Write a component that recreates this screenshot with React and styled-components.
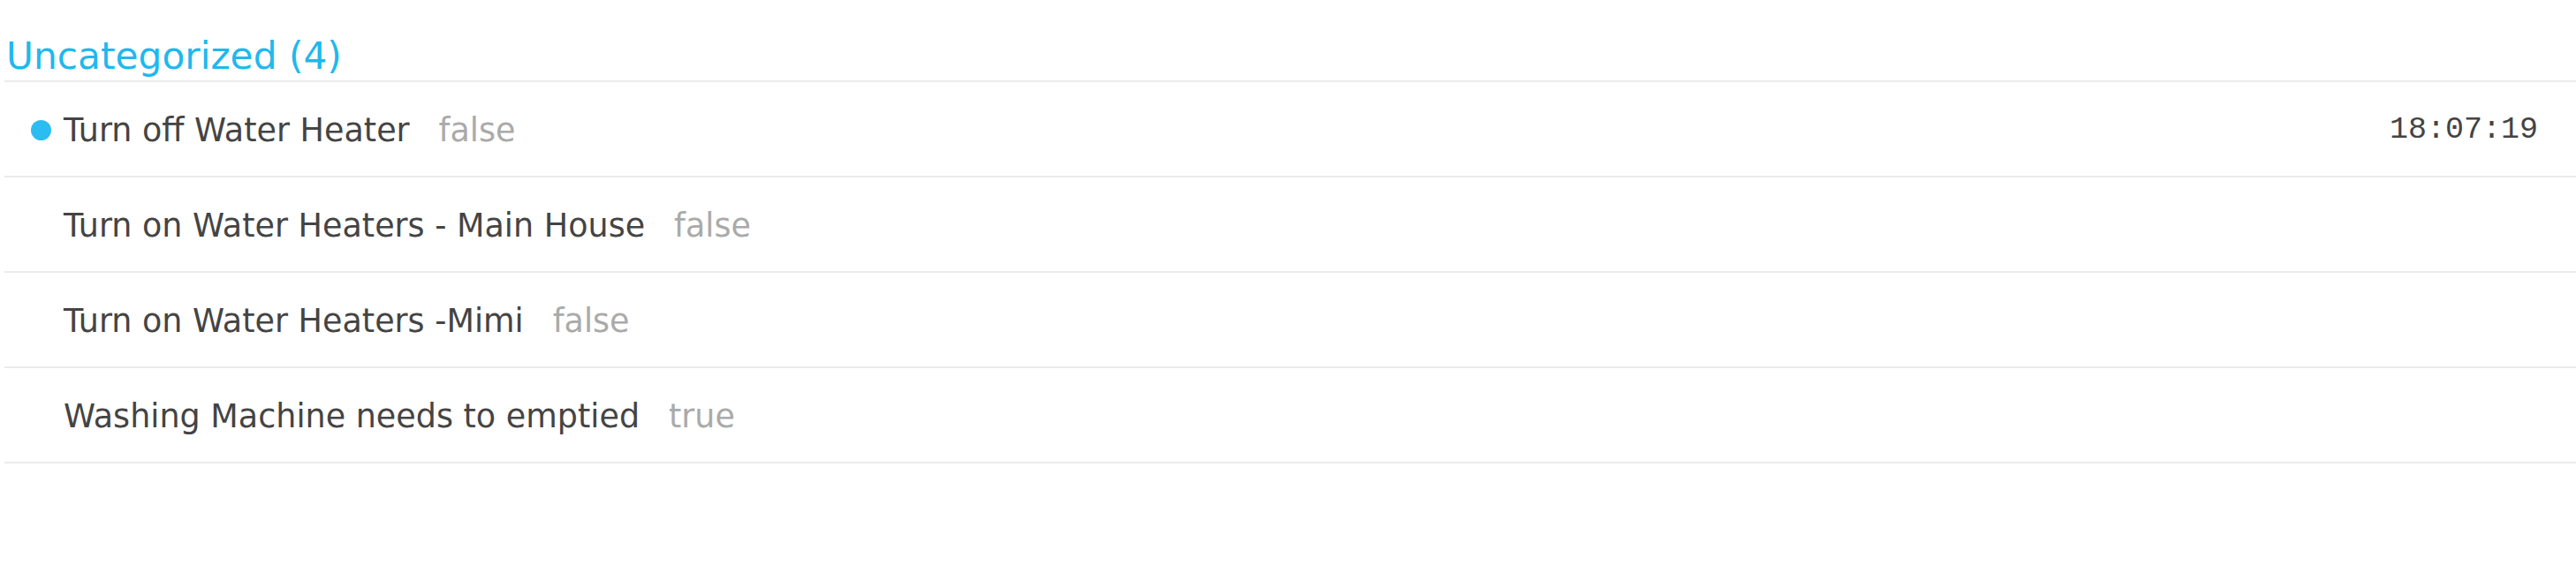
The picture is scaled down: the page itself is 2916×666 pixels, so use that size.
import React from 'react';
import styled, { createGlobalStyle } from 'styled-components';

const GlobalStyle = createGlobalStyle`
  body {
    margin: 0;
    background: #fff;
    font-family: "DejaVu Sans", Verdana, sans-serif;
  }
`;

const Group = styled.section`
  padding: 0 0 0 5px;
`;

const GroupTitle = styled.h2`
  margin: 0;
  padding: 40px 0 4px 2px;
  font-size: 42.3px;
  font-weight: normal;
  line-height: 47px;
  color: #1fb8ee;
  border-bottom: 2px solid #ebebeb;
`;

const List = styled.ul`
  list-style: none;
  margin: 0;
  padding: 0;
`;

const Row = styled.li`
  display: flex;
  align-items: center;
  height: 106px;
  border-bottom: 2px solid #ebebeb;
  padding: 2px 43px 0 30px;
  box-sizing: border-box;
  height: 108px;
`;

const Dot = styled.span`
  width: 23px;
  height: 23px;
  border-radius: 50%;
  flex: none;
  background: ${(p) => (p.$active ? '#2cbcf2' : 'transparent')};
  margin-right: 14px;
`;

const Name = styled.span`
  font-size: 36.5px;
  color: #444;
`;

const Value = styled.span`
  font-size: 36.5px;
  color: #aaa;
  margin-left: 33px;
`;

const Time = styled.span`
  margin-left: auto;
  font-family: "Liberation Mono", "Courier New", monospace;
  font-size: 35px;
  color: #444;
`;

const items = [
  { name: 'Turn off Water Heater', value: 'false', time: '18:07:19', active: true },
  { name: 'Turn on Water Heaters - Main House', value: 'false' },
  { name: 'Turn on Water Heaters -Mimi', value: 'false' },
  { name: 'Washing Machine needs to emptied', value: 'true' },
];

const App = () => {
  return (
    <>
      <GlobalStyle />
      <Group>
        <GroupTitle>Uncategorized ({items.length})</GroupTitle>
        <List>
          {items.map((item) => (
            <Row key={item.name}>
              <Dot $active={item.active} />
              <Name>{item.name}</Name>
              <Value>{item.value}</Value>
              {item.time && <Time>{item.time}</Time>}
            </Row>
          ))}
        </List>
      </Group>
    </>
  );
};

export default App;
